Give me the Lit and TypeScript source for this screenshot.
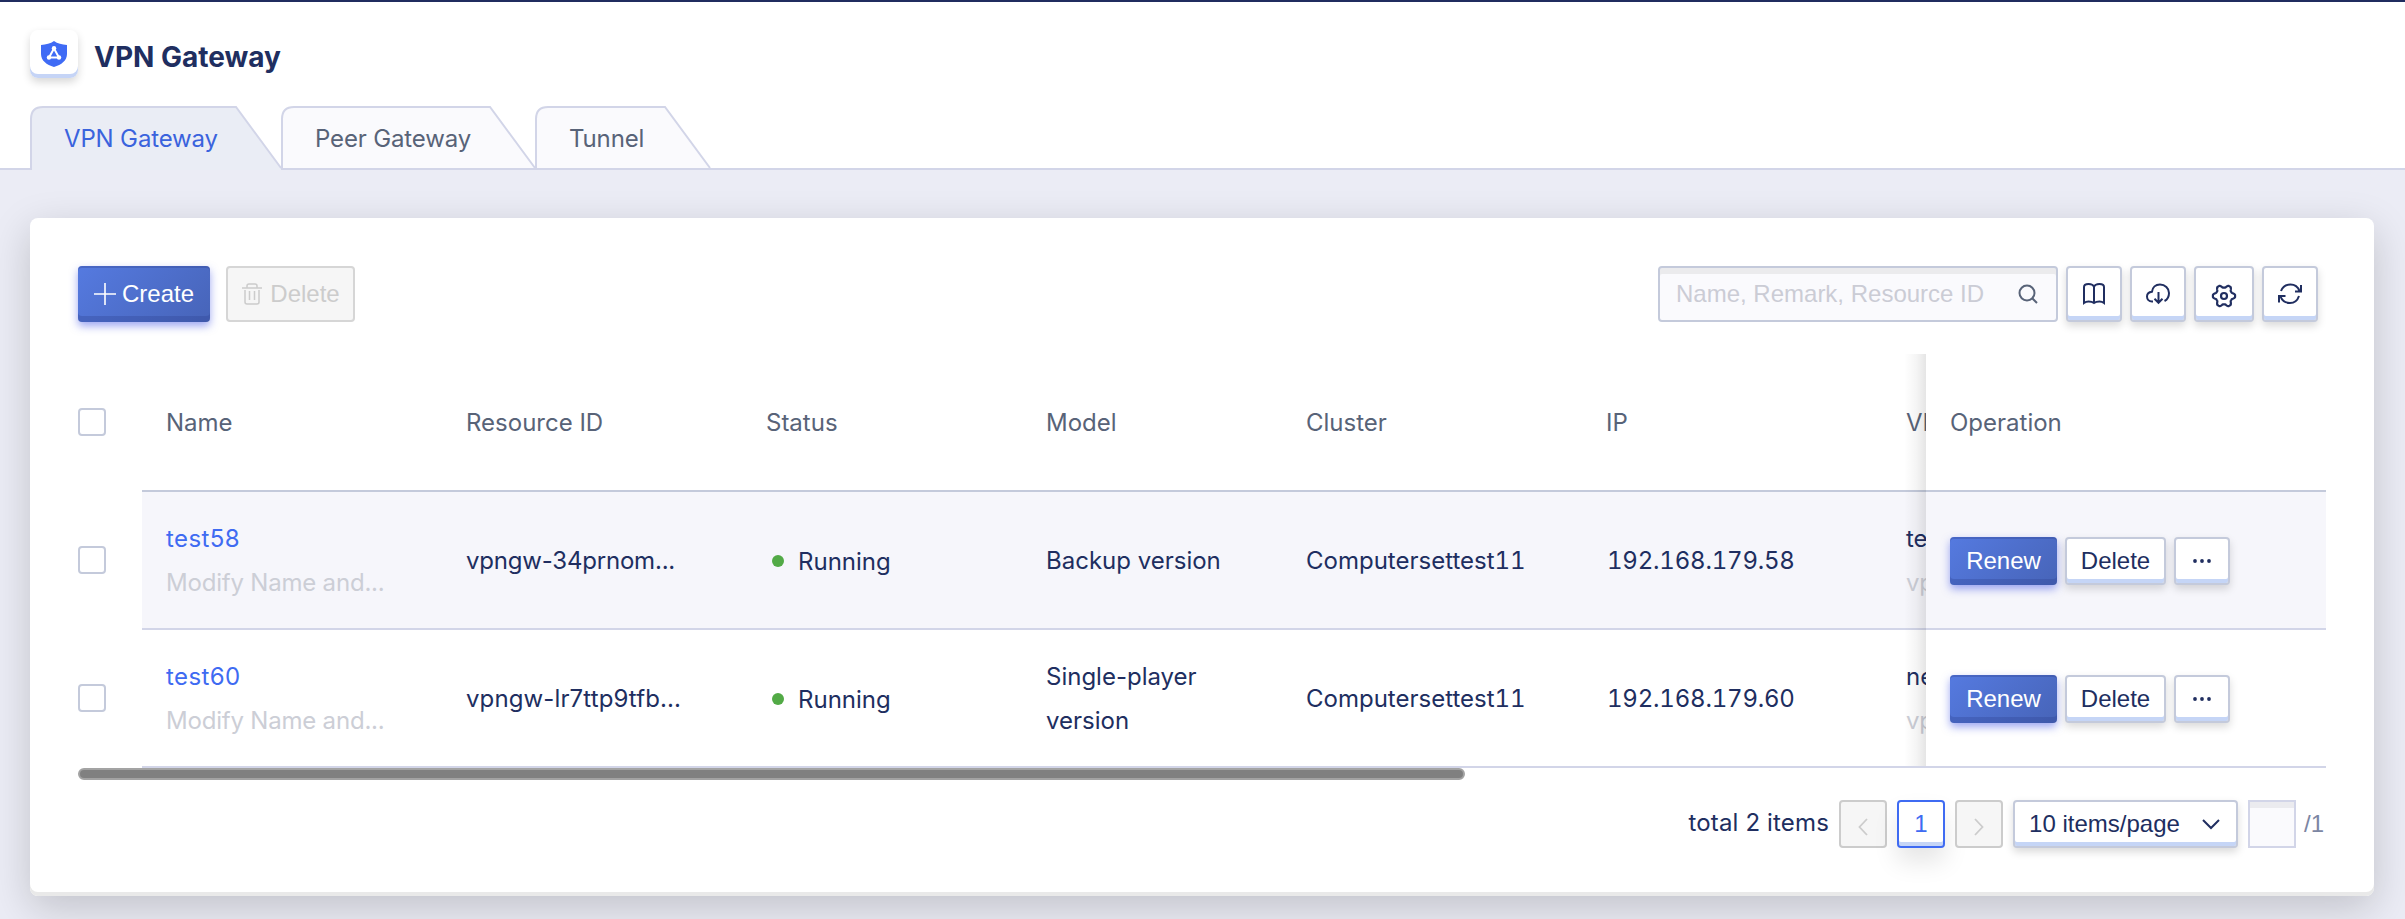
import { LitElement, html, css, svg } from "lit";
import { customElement } from "lit/decorators.js";

const tabs = [
  { label: "VPN Gateway", w: 251, active: true },
  { label: "Peer Gateway", w: 254, active: false },
  { label: "Tunnel", w: 175, active: false },
];

const columns = [
  { label: "Name", w: 300 },
  { label: "Resource ID", w: 300 },
  { label: "Status", w: 280 },
  { label: "Model", w: 260 },
  { label: "Cluster", w: 300 },
  { label: "IP", w: 300 },
  { label: "VPC", w: 300 },
];

const rows = [
  { name: "test58", id: "vpngw-34prnom...", model: "Backup version", ip: "192.168.179.58", vpc: "test", hover: true },
  { name: "test60", id: "vpngw-lr7ttp9tfb...", model: "Single-player version", ip: "192.168.179.60", vpc: "net", hover: false },
];

// Outline of the six-lobed settings gear, centred in a 26px box.
const gearPath = "M" + Array.from({ length: 120 }, (_, i) => {
  const a = (i / 120) * Math.PI * 2;
  const lobe = Math.max(-1, Math.min(1, 1.35 * Math.cos(6 * a)));
  const r = 9.700 + 1.400 * lobe;
  return `${(13 + r * Math.cos(a)).toFixed(2)} ${(13 + r * Math.sin(a)).toFixed(2)}`;
}).join("L") + "Z";

@customElement("app-root")
export class AppRoot extends LitElement {
  static styles = css`
    * { box-sizing: border-box; }
    :host {
      display: flex; flex-direction: column; width: 100%; height: 919px; overflow: hidden;
      background: #ebecf5; color: #202e60; font: 24px/44px Inter, "Noto Sans", sans-serif;
      border-top: 2px solid #202c5f;
    }
    svg { display: block; fill: none; stroke: currentColor; flex: none; }
    svg.solid { stroke: none; }
    .head { background: #fff; height: 168px; flex: none; display: flex; flex-direction: column; justify-content: space-between; padding-top: 28px; }
    .brand { display: flex; align-items: center; padding-left: 30px; gap: 16px; height: 48px; }
    .logo { width: 48px; height: 48px; border-radius: 8px; background: #fff; display: flex; align-items: center; justify-content: center;
      padding-bottom: 1px; box-shadow: inset 0 -4px 0 #c5d4f6, 0 4px 8px rgba(0,0,0,.16); }
    .title { font-size: 28px; font-weight: 650; padding-top: 5px; letter-spacing: 0; }
    .tabs { display: flex; height: 64px; box-shadow: inset 0 -2px 0 #d2d5e8; padding-left: 30px; }
    .tab { display: grid; height: 64px; color: #586378; white-space: nowrap; letter-spacing: -.15px; }
    .tab > * { grid-area: 1 / 1; }
    .tab span { padding-left: 34px; line-height: 66px; }
    .tab.on { color: #3a63dd; }
    .card { margin: 48px 31px 0 30px; height: 678px; background: #fff; border-radius: 8px; padding: 48px;
      box-shadow: inset 0 -4px 0 #e9e9e9, 0 12px 40px rgba(0,0,0,.18); }
    .bar { display: flex; height: 56px; align-items: center; padding-right: 8px; }
    .grow { flex: 1; }
    .btn { font: 24px/44px "Liberation Sans", Arial, sans-serif; display: flex; align-items: center; justify-content: center;
      height: 48px; border-radius: 4px; border: 2px solid #c4cadb; background: #fff; padding-bottom: 1px;
      box-shadow: inset 0 -4px 0 #c5d5f6, 0 4px 8px rgba(0,0,0,.15); white-space: nowrap; }
    .primary { color: #fff; border: 0; background: linear-gradient(135deg, #557ae0, #4764b8);
      box-shadow: inset 0 2px 0 rgba(50,70,150,.35), inset 0 -6px 0 rgba(50,70,150,.35), 0 4px 8px rgba(60,80,230,.5); padding: 0 0 1px; }
    .tall { height: 56px; }
    .off { color: #ccc; background: #f6f6f6; border-color: #d6d6d6; box-shadow: none; }
    .create { width: 132px; gap: 6px; }
    .del { width: 129px; margin-left: 16px; gap: 7px; }
    .search { width: 400px; height: 56px; border: 2px solid #c4cadb; border-radius: 4px; background: #fafafd; display: flex; align-items: center;
      justify-content: space-between; padding: 0 18px 0 16px; box-shadow: inset 0 6px 0 #ebebed; color: #cbccd5; font: 24px "Liberation Sans", Arial, sans-serif; }
    .ib { width: 56px; margin-left: 8px; }
    .ib.wide { width: 60px; }
    .ib.wide svg { margin-top: 4px; }
    .search svg { color: #586378; }
    .table { margin-top: 32px; display: flex; width: 2248px; height: 414px; }
    .checks { width: 64px; }
    .checks div { height: 138px; display: flex; align-items: center; padding-bottom: 2px; }
    .checks i { width: 28px; height: 28px; border: 2px solid #c4cadb; border-radius: 4px; }
    .scroll { width: 1784px; overflow: hidden; display: grid; grid-template-columns: 1784px; }
    .scroll > * { grid-area: 1 / 1; }
    .shade { justify-self: end; width: 22px; height: 412px; background: linear-gradient(to left, rgba(0,0,0,.1), rgba(0,0,0,.04) 45%, transparent); }
    .row { display: flex; height: 138px; border-bottom: 2px solid #d2d5e8; align-items: center; width: 2040px; padding-top: 2px; }
    .row.h { color: #586378; border-color: #c4cadb; }
    .hov { background: #f6f6fb; }
    .cell { flex: none; padding: 0 24px; }
    .fixed { width: 400px; }
    .fixed .row { width: 400px; padding-left: 24px; gap: 8px; }
    .link { color: #3f6bf2; letter-spacing: .4px; }
    .sub { color: #ccced6; white-space: nowrap; letter-spacing: -.2px; }
    .tight { letter-spacing: -.2px; }
    .loose { letter-spacing: .12px; }
    .num { font-variant-numeric: tabular-nums; }
    .ip { padding-left: 1px; letter-spacing: -.2px; }
    .status { display: flex; align-items: center; padding: 1px 0 0 6px; gap: 14px; }
    .dot { width: 12px; height: 12px; border-radius: 50%; background: #52aa46; margin-top: -1px; }
    .thumb { width: 1387px; height: 12px; border-radius: 6px; background: #808080; border: 2px solid #a3a3a3; }
    .pager { display: flex; height: 48px; margin-top: 20px; align-items: center; justify-content: flex-end; padding-right: 2px; }
    .total { letter-spacing: .15px; margin-right: 10px; padding-bottom: 2px; }
    .pg { width: 48px; margin-right: 10px; }
    .pg svg { margin-top: 6px; }
    .cur { color: #3f6bf2; border-color: #3f6bf2; box-shadow: inset 0 -4px 0 #c5d5f6, 0 14px 24px rgba(0,0,0,.1); }
    .off.pg { border-color: #ccc; }
    .sel { width: 225px; gap: 22px; padding-right: 2px; }
    .jump { width: 48px; height: 48px; border: 2px solid #d2d5e8; background: #fafafd; box-shadow: inset 0 6px 0 #ebebef; margin: 0 8px 0 10px; }
    .pages { color: #7c86a3; font: 24px "Liberation Sans", Arial, sans-serif; }
  `;

  tab(t: (typeof tabs)[number]) {
    const w = t.w;
    return html`<div class="tab ${t.active ? "on" : ""}" style="width:${w}px">
      <svg class="solid" width=${w + 3} height="64">
        <path d="M1 64V13Q1 1 13 1H${w - 45}L${w + 1} 64Z" fill=${t.active ? "#eaedf5" : "#fafafd"}></path>
        <path d="M1 ${t.active ? 64 : 62}V13Q1 1 13 1H${w - 45}L${w} 62" fill="none" stroke="#d2d5e8" stroke-width="2"></path>
        ${t.active ? "" : svg`<path d=${`M0 63H${w + 1}`} stroke="#d2d5e8" stroke-width="2"></path>`}
      </svg><span>${t.label}</span></div>`;
  }

  render() {
    return html`
      <div class="head">
        <div class="brand">
          <div class="logo"><svg class="solid" width="26" height="26" viewBox="0 0 26 26">
            <path d="M13 0C16.500 2.500 21 3.700 26 4V13C26 19.500 20.500 23.800 13 26C5.500 23.800 0 19.500 0 13V4C5 3.700 9.500 2.500 13 0Z" fill="#3f6bf5"></path>
            <path d="M13 7.500L8 16.500H18Z" stroke="#fff" stroke-width="2"></path>
            <g fill="#fff"><circle cx="13" cy="7.300" r="2.200"></circle><circle cx="8" cy="16.500" r="2.200"></circle><circle cx="18" cy="16.500" r="2.200"></circle></g>
          </svg></div>
          <div class="title">VPN Gateway</div>
        </div>
        <div class="tabs">${tabs.map((t) => this.tab(t))}</div>
      </div>
      <div class="card">
        <div class="bar">
          <div class="btn primary tall create"><svg width="22" height="22" stroke-width="1.600"><path d="M11 0V22M0 11H22"></path></svg>Create</div>
          <div class="btn off tall del"><svg width="22" height="24" stroke-width="1.500"><path d="M1 6H21M6 6V4Q6 2 8 2H14Q16 2 16 4V6M4 8V20Q4 22 6 22H16Q18 22 18 20V8M8.500 9V18M13.500 9V18"></path></svg>Delete</div>
          <div class="grow"></div>
          <div class="search">Name, Remark, Resource ID<svg width="20" height="20" stroke-width="2"><circle cx="9" cy="9" r="7.500"></circle><path d="M14.500 14.500L19 19"></path></svg></div>
          <div class="btn tall ib"><svg width="24" height="22" stroke-width="2"><path d="M12 4Q11 1 6.500 1Q2 1 2 4V20Q4 18.500 6.500 18.500Q10 18.500 12 20Q14 18.500 17.500 18.500Q20 18.500 22 20V4Q22 1 17.500 1Q13 1 12 4V20"></path></svg></div>
          <div class="btn tall ib"><svg width="26" height="22" stroke-width="2"><path d="M8 18.500H7C4 18.500 2 16.200 2 13.500C2 10.800 4 9 7 8.700C7.500 4.500 10.500 1.500 15 1.500C20 1.500 24 5.300 24 10C24 13.500 22.500 16.500 19.500 18M13.500 9V19.500M9.500 15.800L13.500 19.800L17.500 15.800"></path></svg></div>
          <div class="btn tall ib wide"><svg width="26" height="26" viewBox="0 0 26 26" stroke-width="2.200" stroke-linejoin="round"><path d=${gearPath}></path><circle cx="13" cy="13" r="3"></circle></svg></div>
          <div class="btn tall ib"><svg width="26" height="22" stroke-width="2"><path d="M4 8C5.500 4 9 1.500 13.500 1.500C17.500 1.500 21 4 22.500 8M24 2V8.500H18M22 13C20.500 17.500 17.500 20 13 20C8.500 20 5 17.500 3.500 13.500M2 19.500V13H8.500"></path></svg></div>
        </div>
        <div class="table">
          <div class="checks"><div><i></i></div><div><i></i></div><div><i></i></div></div>
          <div class="scroll">
            <div>
              <div class="row h">${columns.map((c) => html`<div class="cell" style="width:${c.w}px">${c.label}</div>`)}</div>
              ${rows.map((r) => {
                const cells = [
                  html`<div class="link">${r.name}</div><div class="sub">Modify Name and...</div>`,
                  html`<div class=${r.hover ? "tight" : "loose"}>${r.id}</div>`,
                  html`<div class="status"><span class="dot"></span>Running</div>`,
                  r.model,
                  html`<div class="num">Computersettest11</div>`,
                  html`<div class="num ip">${r.ip}</div>`,
                  html`<div>${r.vpc}</div><div class="sub">vpc</div>`,
                ];
                return html`<div class="row ${r.hover ? "hov" : ""}">${cells.map((c, i) => html`<div class="cell" style="width:${columns[i].w}px">${c}</div>`)}</div>`;
              })}
            </div>
            <div class="shade"></div>
          </div>
          <div class="fixed">
            <div class="row h">Operation</div>
            ${rows.map((r) => html`<div class="row ${r.hover ? "hov" : ""}">
              <div class="btn primary" style="width:107px">Renew</div>
              <div class="btn" style="width:101px">Delete</div>
              <div class="btn" style="width:56px"><svg class="solid" width="20" height="4"><g fill="#202e60"><circle cx="3" cy="2" r="1.900"></circle><circle cx="10" cy="2" r="1.900"></circle><circle cx="17" cy="2" r="1.900"></circle></g></svg></div>
            </div>`)}
          </div>
        </div>
        <div class="thumb"></div>
        <div class="pager">
          <span class="total">total 2 items</span>
          <div class="btn pg off"><svg width="10" height="18" stroke-width="1.800"><path d="M9 1L1.500 9L9 17"></path></svg></div>
          <div class="btn pg cur">1</div>
          <div class="btn pg off"><svg width="10" height="18" stroke-width="1.800"><path d="M1 1L8.500 9L1 17"></path></svg></div>
          <div class="btn sel">10 items/page<svg width="18" height="12" stroke-width="2"><path d="M1 2L9 10L17 2"></path></svg></div>
          <div class="jump"></div>
          <span class="pages">/1</span>
        </div>
      </div>`;
  }
}
